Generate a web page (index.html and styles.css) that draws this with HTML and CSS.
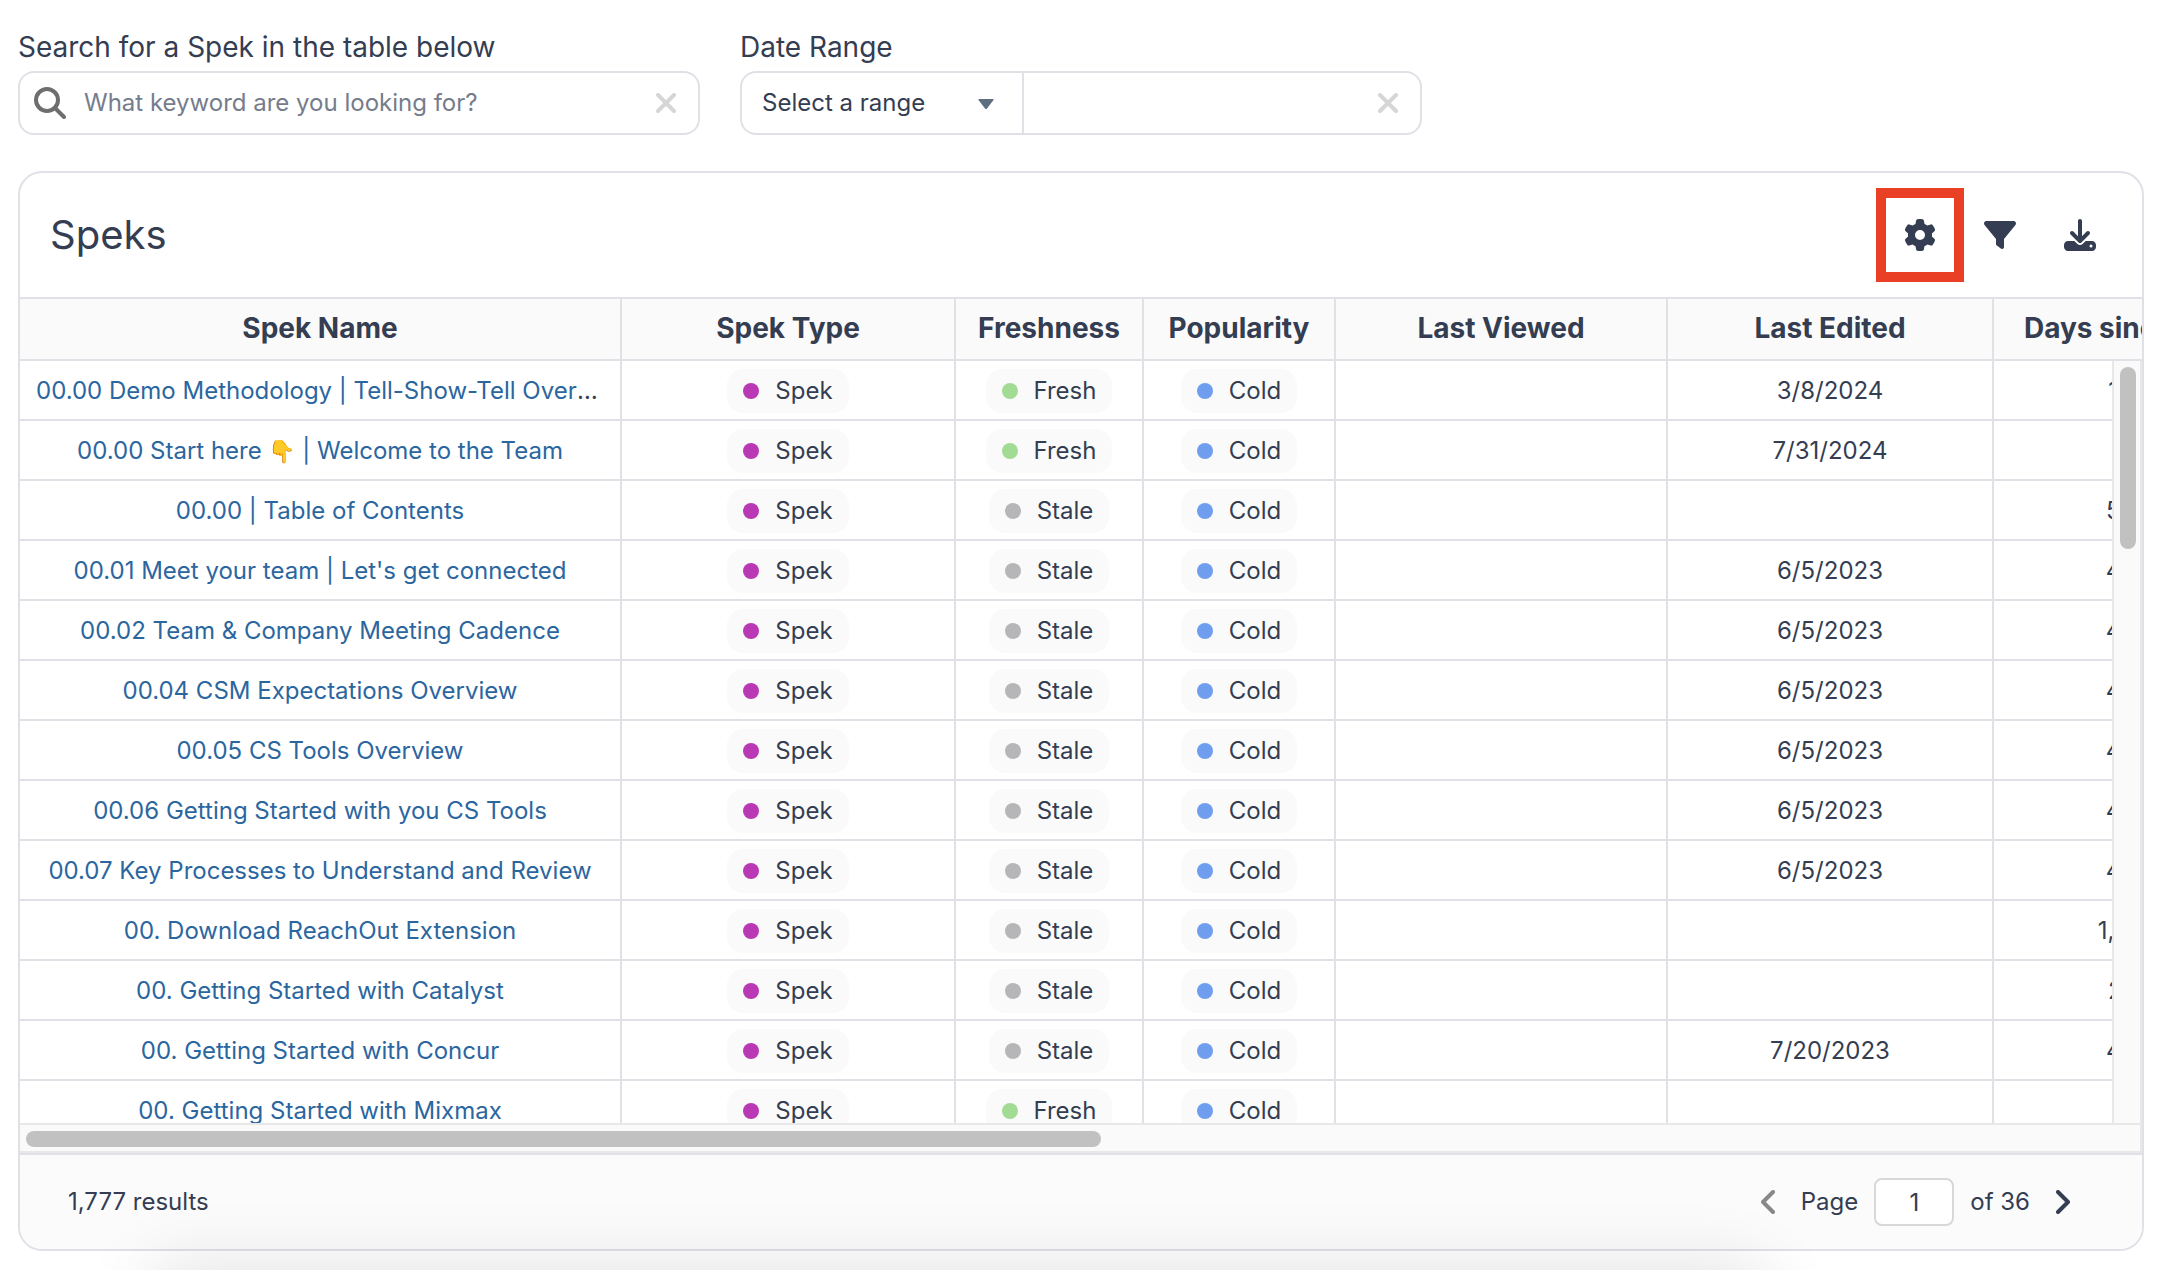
FILE: index.html
```html
<!DOCTYPE html>
<html lang="en">
<head>
<meta charset="utf-8">
<title>Speks</title>
<link rel="stylesheet" href="styles.css">
</head>
<body>
<form class="filters">
  <div class="field">
    <label class="field-label" for="search">Search for a Spek in the table below</label>
    <div class="control">
      <svg class="search-icon" viewBox="0 0 32 32" aria-hidden="true"><circle cx="13" cy="13" r="11"/><path d="M21 21l9 9"/></svg>
      <input class="text-input" id="search" type="text" placeholder="What keyword are you looking for?">
      <button class="clear" type="button" aria-label="Clear search"><svg viewBox="0 0 20 20"><path d="M2 2l16 16M18 2L2 18"/></svg></button>
    </div>
  </div>
  <div class="field">
    <label class="field-label" for="range">Date Range</label>
    <div class="control control-split">
      <div class="select-wrap">
        <select class="select" id="range"><option>Select a range</option></select>
        <svg class="caret" viewBox="0 0 16 10" aria-hidden="true"><path d="M1 0h14q1 0 .5 1L9 9.500q-1 1-2 0L.5 1Q0 0 1 0z"/></svg>
      </div>
      <input class="text-input" type="text" aria-label="Selected dates">
      <button class="clear" type="button" aria-label="Clear dates"><svg viewBox="0 0 20 20"><path d="M2 2l16 16M18 2L2 18"/></svg></button>
    </div>
  </div>
</form>

<main class="card">
  <header class="card-head">
    <h1 class="title">Speks</h1>
    <div class="tools">
      <button class="tool tool-marked" type="button" aria-label="Settings"><svg viewBox="0 0 512 512"><path d="M495.900 166.600c3.200 8.700 .5 18.400-6.400 24.600l-43.300 39.400c1.100 8.300 1.700 16.800 1.700 25.400s-.6 17.100-1.700 25.400l43.300 39.400c6.900 6.200 9.600 15.900 6.400 24.600c-4.400 11.900-9.700 23.300-15.800 34.300l-4.700 8.100c-6.600 11-14 21.400-22.100 31.200c-5.900 7.200-15.700 9.600-24.500 6.800l-55.700-17.700c-13.400 10.300-28.200 18.900-44 25.400l-12.500 57.100c-2 9.100-9 16.300-18.200 17.800c-13.800 2.300-28 3.500-42.500 3.500s-28.700-1.200-42.500-3.500c-9.200-1.500-16.200-8.700-18.200-17.800l-12.500-57.100c-15.800-6.500-30.600-15.100-44-25.400L83.100 425.900c-8.800 2.800-18.600 .3-24.500-6.800c-8.100-9.800-15.500-20.200-22.100-31.200l-4.700-8.100c-6.100-11-11.400-22.400-15.800-34.300c-3.200-8.700-.5-18.400 6.400-24.600l43.300-39.400C64.600 273.100 64 264.600 64 256s.6-17.100 1.700-25.400L22.400 191.200c-6.900-6.200-9.600-15.900-6.400-24.600c4.400-11.900 9.700-23.300 15.800-34.300l4.700-8.100c6.600-11 14-21.400 22.100-31.200c5.900-7.200 15.700-9.600 24.500-6.800l55.700 17.700c13.400-10.300 28.200-18.900 44-25.400l12.500-57.100c2-9.100 9-16.300 18.200-17.800C227.300 1.200 241.500 0 256 0s28.700 1.200 42.500 3.500c9.200 1.500 16.200 8.700 18.200 17.800l12.500 57.100c15.800 6.500 30.600 15.100 44 25.400l55.700-17.700c8.800-2.800 18.600-.3 24.500 6.800c8.100 9.800 15.500 20.200 22.100 31.200l4.700 8.100c6.100 11 11.400 22.400 15.800 34.300zM256 336a80 80 0 1 0 0-160 80 80 0 1 0 0 160z"/></svg></button>
      <button class="tool" type="button" aria-label="Filter"><svg viewBox="0 0 512 512"><path d="M3.900 54.900C10.500 40.900 24.500 32 40 32H472c15.500 0 29.500 8.900 36.100 22.900s4.600 30.500-5.200 42.500L320 320.900V448c0 12.100-6.800 23.200-17.700 28.600s-23.800 4.300-33.500-3l-64-48c-8.100-6-12.800-15.500-12.800-25.600V320.900L9 97.300C-.7 85.400-2.800 68.800 3.900 54.900z"/></svg></button>
      <button class="tool" type="button" aria-label="Download"><svg viewBox="0 0 512 512"><path d="M288 32c0-17.700-14.300-32-32-32s-32 14.300-32 32V274.700l-73.400-73.400c-12.500-12.500-32.800-12.500-45.300 0s-12.500 32.800 0 45.300l128 128c12.500 12.500 32.800 12.500 45.300 0l128-128c12.500-12.500 12.500-32.800 0-45.300s-32.800-12.500-45.300 0L288 274.700V32zM64 352c-35.300 0-64 28.700-64 64v32c0 35.300 28.700 64 64 64H448c35.300 0 64-28.700 64-64V416c0-35.300-28.700-64-64-64H346.500l-45.300 45.300c-25 25-65.500 25-90.500 0L165.500 352H64zm368 56a24 24 0 1 1 0 48 24 24 0 1 1 0-48z"/></svg></button>
    </div>
  </header>

  <div class="grid">
    <table class="table">
      <colgroup><col class="c-name"><col class="c-type"><col class="c-fresh"><col class="c-pop"><col class="c-viewed"><col class="c-edited"><col class="c-days"></colgroup>
      <thead>
        <tr><th>Spek Name</th><th>Spek Type</th><th>Freshness</th><th>Popularity</th><th>Last Viewed</th><th>Last Edited</th><th>Days since Edit</th></tr>
      </thead>
      <tbody>
        <tr><td><a href="#">00.00 Demo Methodology | Tell-Show-Tell Overview</a></td><td><span class="tag spek">Spek</span></td><td><span class="tag fresh">Fresh</span></td><td><span class="tag cold">Cold</span></td><td></td><td>3/8/2024</td><td>166</td></tr>
        <tr><td><a href="#">00.00 Start here <span class="emoji">👇</span> | Welcome to the Team</a></td><td><span class="tag spek">Spek</span></td><td><span class="tag fresh">Fresh</span></td><td><span class="tag cold">Cold</span></td><td></td><td>7/31/2024</td><td></td></tr>
        <tr><td><a href="#">00.00 | Table of Contents</a></td><td><span class="tag spek">Spek</span></td><td><span class="tag stale">Stale</span></td><td><span class="tag cold">Cold</span></td><td></td><td></td><td>525</td></tr>
        <tr><td><a href="#">00.01 Meet your team | Let's get connected</a></td><td><span class="tag spek">Spek</span></td><td><span class="tag stale">Stale</span></td><td><span class="tag cold">Cold</span></td><td></td><td>6/5/2023</td><td>452</td></tr>
        <tr><td><a href="#">00.02 Team &amp; Company Meeting Cadence</a></td><td><span class="tag spek">Spek</span></td><td><span class="tag stale">Stale</span></td><td><span class="tag cold">Cold</span></td><td></td><td>6/5/2023</td><td>452</td></tr>
        <tr><td><a href="#">00.04 CSM Expectations Overview</a></td><td><span class="tag spek">Spek</span></td><td><span class="tag stale">Stale</span></td><td><span class="tag cold">Cold</span></td><td></td><td>6/5/2023</td><td>452</td></tr>
        <tr><td><a href="#">00.05 CS Tools Overview</a></td><td><span class="tag spek">Spek</span></td><td><span class="tag stale">Stale</span></td><td><span class="tag cold">Cold</span></td><td></td><td>6/5/2023</td><td>452</td></tr>
        <tr><td><a href="#">00.06 Getting Started with you CS Tools</a></td><td><span class="tag spek">Spek</span></td><td><span class="tag stale">Stale</span></td><td><span class="tag cold">Cold</span></td><td></td><td>6/5/2023</td><td>452</td></tr>
        <tr><td><a href="#">00.07 Key Processes to Understand and Review</a></td><td><span class="tag spek">Spek</span></td><td><span class="tag stale">Stale</span></td><td><span class="tag cold">Cold</span></td><td></td><td>6/5/2023</td><td>452</td></tr>
        <tr><td><a href="#">00. Download ReachOut Extension</a></td><td><span class="tag spek">Spek</span></td><td><span class="tag stale">Stale</span></td><td><span class="tag cold">Cold</span></td><td></td><td></td><td>1,025</td></tr>
        <tr><td><a href="#">00. Getting Started with Catalyst</a></td><td><span class="tag spek">Spek</span></td><td><span class="tag stale">Stale</span></td><td><span class="tag cold">Cold</span></td><td></td><td></td><td>214</td></tr>
        <tr><td><a href="#">00. Getting Started with Concur</a></td><td><span class="tag spek">Spek</span></td><td><span class="tag stale">Stale</span></td><td><span class="tag cold">Cold</span></td><td></td><td>7/20/2023</td><td>407</td></tr>
        <tr><td><a href="#">00. Getting Started with Mixmax</a></td><td><span class="tag spek">Spek</span></td><td><span class="tag fresh">Fresh</span></td><td><span class="tag cold">Cold</span></td><td></td><td></td><td></td></tr>
      </tbody>
    </table>
    <div class="scroll-y"><div class="thumb"></div></div>
    <div class="scroll-x"><div class="thumb"></div></div>
  </div>

  <footer class="card-foot">
    <span>1,777 results</span>
    <nav class="pager" aria-label="Pagination">
      <button class="step step-off" type="button" aria-label="Previous page"><svg viewBox="0 0 14 24"><path d="M12 2L2 12l10 10"/></svg></button>
      <label for="page">Page</label>
      <input class="page-input" id="page" type="text" value="1">
      <span>of 36</span>
      <button class="step" type="button" aria-label="Next page"><svg viewBox="0 0 14 24"><path d="M2 2l10 10L2 22"/></svg></button>
    </nav>
  </footer>
</main>
<div class="dock-shadow" aria-hidden="true"></div>
</body>
</html>
```

FILE: styles.css
```css
:root {
  --ink: #343d51;
  --line: #e0e0e7;
  --soft: #fafafa;
  --rail: #e8e8e8;
}

* { box-sizing: border-box; }

body {
  margin: 0;
  height: 100vh;
  padding: 28px 34px 19px 18px;
  display: flex;
  flex-direction: column;
  gap: 36px;
  overflow: hidden;
  background: #fff;
  color: var(--ink);
  font: 24px/32px Inter, "Liberation Sans", sans-serif;
}

input, select, button { font: inherit; color: inherit; }
button { border: 0; padding: 0; background: none; }
svg { display: block; }

/* Filters */
.filters { display: flex; gap: 40px; }
.field { flex: 0 1 682px; min-width: 0; }
.field-label { display: block; font-size: 28px; line-height: 38px; margin-bottom: 5px; }
.control {
  display: flex;
  align-items: center;
  height: 64px;
  padding: 0 22px 0 14px;
  border: 2px solid var(--line);
  border-radius: 16px;
}
.control-split { padding-left: 0; }
.search-icon { width: 32px; height: 32px; fill: none; stroke: #6e6e6e; stroke-width: 4; stroke-linecap: round; }
.text-input {
  flex: 1;
  min-width: 0;
  height: 60px;
  padding: 0 18px 2px;
  border: 0;
  background: none;
  outline: 0;
}
.text-input::placeholder { color: #757c8b; opacity: 1; }
.clear svg { width: 20px; height: 20px; fill: none; stroke: #d6d6d6; stroke-width: 4; stroke-linecap: round; }
.select-wrap { position: relative; width: 282px; height: 60px; border-right: 2px solid var(--line); }
.select {
  width: 100%;
  height: 100%;
  padding: 0 20px;
  border: 0;
  background: none;
  appearance: none;
}
.caret { position: absolute; right: 28px; top: 26px; width: 16px; height: 10px; fill: #5f6e80; pointer-events: none; }

/* Card */
.card {
  flex: 1;
  min-height: 0;
  display: flex;
  flex-direction: column;
  overflow: hidden;
  border: 2px solid var(--line);
  border-radius: 24px;
}
.card-head {
  display: flex;
  align-items: center;
  justify-content: space-between;
  height: 124px;
  padding: 0 34px 0 30px;
}
.title { margin: 0; font-size: 40px; line-height: 48px; font-weight: 400; }
.tools { display: flex; align-items: center; }
.tool { width: 56px; height: 94px; margin-left: 24px; display: grid; place-items: center; }
.tool svg { width: 32px; height: 32px; fill: var(--ink); }
.tool-marked { width: 88px; margin-right: -16px; border: 10px solid #e93f25; }

/* Table */
.grid { position: relative; flex: 1; min-height: 0; overflow: hidden; border-top: 2px solid var(--line); border-bottom: 2px solid var(--line); }
.table { width: 2244px; table-layout: fixed; border-collapse: separate; border-spacing: 0; }
.c-name { width: 602px; }
.c-type { width: 334px; }
.c-fresh { width: 188px; }
.c-pop { width: 192px; }
.c-viewed { width: 332px; }
.c-edited { width: 326px; }
.c-days { width: 270px; }
th, td {
  height: 60px;
  padding: 2px 16px 0;
  border-right: 2px solid var(--line);
  border-bottom: 2px solid var(--line);
  text-align: center;
  white-space: nowrap;
  overflow: hidden;
  text-overflow: ellipsis;
}
th { height: 62px; padding: 0 16px 2px; background: var(--soft); font-size: 28px; font-weight: 700; text-overflow: clip; }
a { color: #2b669f; text-decoration: none; }
.emoji { font-size: 22px; line-height: 24px; }
.tag {
  display: inline-flex;
  align-items: center;
  gap: 16px;
  height: 44px;
  padding: 0 16px;
  border-radius: 16px;
  background: var(--soft);
  vertical-align: middle;
}
.tag::before { content: ""; width: 16px; height: 16px; border-radius: 50%; background: currentColor; }
.spek::before { background: #b938b4; }
.fresh::before { background: #a2db93; }
.stale::before { background: #b6b6b8; }
.cold::before { background: #709eee; }

.scroll-y, .scroll-x { position: absolute; right: 0; background: var(--soft); border: 2px solid var(--rail); }
.scroll-y { top: 62px; bottom: 28px; width: 30px; padding: 6px 4px 6px 6px; border-top: 0; border-bottom: 0; }
.scroll-x { left: 0; bottom: 0; height: 30px; padding: 6px; border-left: 0; }
.thumb { border-radius: 8px; background: #c1c1c1; }
.scroll-y .thumb { height: 182px; }
.scroll-x .thumb { width: 51%; height: 16px; }

/* Footer */
.card-foot {
  display: flex;
  align-items: center;
  justify-content: space-between;
  height: 94px;
  padding: 0 72px 0 48px;
  background: #fbfbfb;
}
.pager { display: flex; align-items: center; }
.page-input {
  width: 80px;
  height: 48px;
  margin: 0 16px;
  padding: 0;
  border: 2px solid #d8d8d8;
  border-radius: 8px;
  background: #fff;
  text-align: center;
}
.step svg { width: 14px; height: 24px; fill: none; stroke: var(--ink); stroke-width: 4; stroke-linecap: round; stroke-linejoin: round; }
.step { margin-left: 26px; }
.step-off { margin: 0 26px 0 0; }
.step-off svg { stroke: #888; }

/* Soft shade rising from the bottom edge of the window */
.dock-shadow {
  position: fixed;
  top: 100%;
  left: 7%;
  right: 19%;
  height: 100px;
  box-shadow: 0 0 70px rgba(0, 0, 0, .13);
}
```
